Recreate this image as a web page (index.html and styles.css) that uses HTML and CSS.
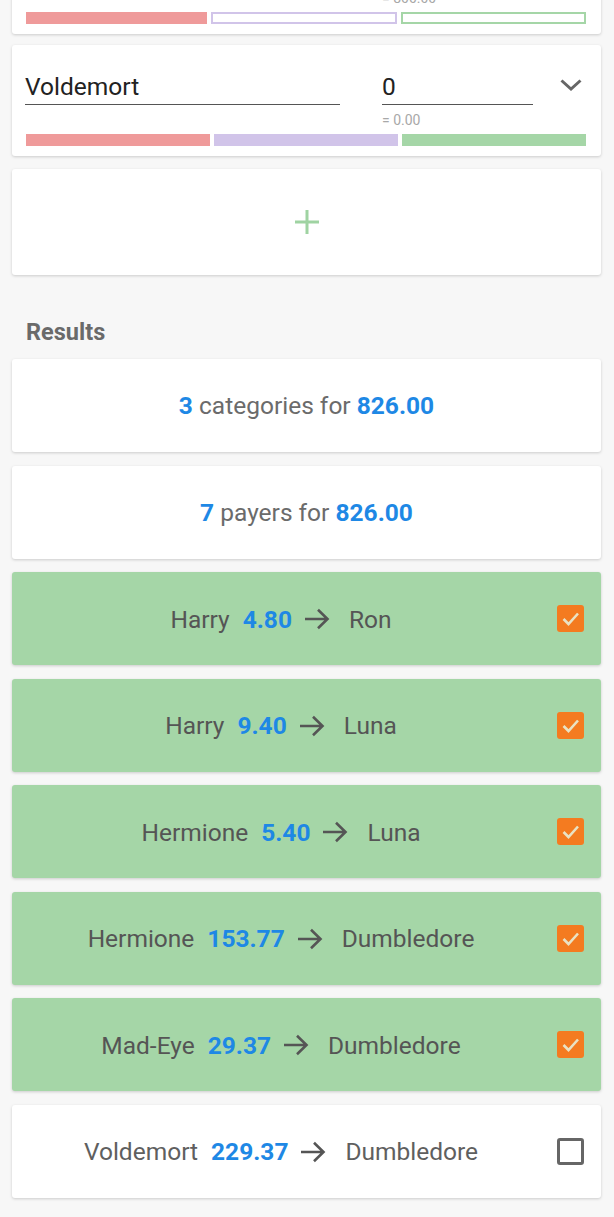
FILE: index.html
```html
<!DOCTYPE html>
<html lang="en">
<head>
<meta charset="utf-8">
<title>Split</title>
<link rel="stylesheet" href="styles.css">
</head>
<body>
<div class="page">
  <div class="card payer payer-first">
    <div class="inputs">
      <div class="field name-field">Dumbledore</div>
      <div class="field amount-field">800</div>
      <svg class="chevron" width="22" height="12" viewBox="0 0 22 12"><path d="M1.5 1.5 L11 10 L20.5 1.5" fill="none" stroke="#666" stroke-width="3"/></svg>
    </div>
    <div class="hint">= 800.00</div>
    <div class="bars">
      <span class="bar red"></span>
      <span class="bar purple outline"></span>
      <span class="bar green outline"></span>
    </div>
  </div>

  <div class="card payer">
    <div class="inputs">
      <div class="field name-field">Voldemort</div>
      <div class="field amount-field">0</div>
      <svg class="chevron" width="22" height="12" viewBox="0 0 22 12"><path d="M1.5 1.5 L11 10 L20.5 1.5" fill="none" stroke="#666" stroke-width="3"/></svg>
    </div>
    <div class="hint">= 0.00</div>
    <div class="bars">
      <span class="bar red"></span>
      <span class="bar purple"></span>
      <span class="bar green"></span>
    </div>
  </div>

  <div class="card add-card">
    <svg width="26" height="26" viewBox="0 0 26 26"><path d="M13 1 V25 M1 13 H25" stroke="#9fd3a2" stroke-width="3" fill="none"/></svg>
  </div>

  <h2 class="section-title">Results</h2>

  <div class="card summary"><span class="num">3</span>&nbsp;categories for&nbsp;<span class="num">826.00</span></div>
  <div class="card summary"><span class="num">7</span>&nbsp;payers for&nbsp;<span class="num">826.00</span></div>

  <div class="card transfer done">
    <div class="transfer-text"><span class="from">Harry</span><span class="num amt">4.80</span><svg class="arrow" width="26" height="22" viewBox="0 0 26 22"><path d="M1 11 H23.5 M14 1.8 L23.5 11 L14 20.2" fill="none" stroke="#555" stroke-width="2.6"/></svg><span class="to">Ron</span></div>
    <span class="check on"><svg width="27" height="27" viewBox="0 0 27 27"><path d="M6.5 14 L11.5 19 L21 8.5" fill="none" stroke="#e9e2c4" stroke-width="2.6"/></svg></span>
  </div>
  <div class="card transfer done">
    <div class="transfer-text"><span class="from">Harry</span><span class="num amt">9.40</span><svg class="arrow" width="26" height="22" viewBox="0 0 26 22"><path d="M1 11 H23.5 M14 1.8 L23.5 11 L14 20.2" fill="none" stroke="#555" stroke-width="2.6"/></svg><span class="to">Luna</span></div>
    <span class="check on"><svg width="27" height="27" viewBox="0 0 27 27"><path d="M6.5 14 L11.5 19 L21 8.5" fill="none" stroke="#e9e2c4" stroke-width="2.6"/></svg></span>
  </div>
  <div class="card transfer done">
    <div class="transfer-text"><span class="from">Hermione</span><span class="num amt">5.40</span><svg class="arrow" width="26" height="22" viewBox="0 0 26 22"><path d="M1 11 H23.5 M14 1.8 L23.5 11 L14 20.2" fill="none" stroke="#555" stroke-width="2.6"/></svg><span class="to">Luna</span></div>
    <span class="check on"><svg width="27" height="27" viewBox="0 0 27 27"><path d="M6.5 14 L11.5 19 L21 8.5" fill="none" stroke="#e9e2c4" stroke-width="2.6"/></svg></span>
  </div>
  <div class="card transfer done">
    <div class="transfer-text"><span class="from">Hermione</span><span class="num amt">153.77</span><svg class="arrow" width="26" height="22" viewBox="0 0 26 22"><path d="M1 11 H23.5 M14 1.8 L23.5 11 L14 20.2" fill="none" stroke="#555" stroke-width="2.6"/></svg><span class="to">Dumbledore</span></div>
    <span class="check on"><svg width="27" height="27" viewBox="0 0 27 27"><path d="M6.5 14 L11.5 19 L21 8.5" fill="none" stroke="#e9e2c4" stroke-width="2.6"/></svg></span>
  </div>
  <div class="card transfer done">
    <div class="transfer-text"><span class="from">Mad-Eye</span><span class="num amt">29.37</span><svg class="arrow" width="26" height="22" viewBox="0 0 26 22"><path d="M1 11 H23.5 M14 1.8 L23.5 11 L14 20.2" fill="none" stroke="#555" stroke-width="2.6"/></svg><span class="to">Dumbledore</span></div>
    <span class="check on"><svg width="27" height="27" viewBox="0 0 27 27"><path d="M6.5 14 L11.5 19 L21 8.5" fill="none" stroke="#e9e2c4" stroke-width="2.6"/></svg></span>
  </div>
  <div class="card transfer">
    <div class="transfer-text"><span class="from">Voldemort</span><span class="num amt">229.37</span><svg class="arrow" width="26" height="22" viewBox="0 0 26 22"><path d="M1 11 H23.5 M14 1.8 L23.5 11 L14 20.2" fill="none" stroke="#555" stroke-width="2.6"/></svg><span class="to">Dumbledore</span></div>
    <span class="check off"></span>
  </div>
</div>
</body>
</html>
```

FILE: styles.css
```css
* { box-sizing: border-box; }

html, body {
  margin: 0;
  padding: 0;
  background: #f7f7f7;
  font-family: Roboto, "Liberation Sans", sans-serif;
  overflow: hidden;
}

.page {
  padding: 0 13px 40px 12px;
}

.card {
  background: #fff;
  border-radius: 3px;
  box-shadow: 0 1px 3px rgba(0, 0, 0, 0.18);
}

/* payer cards */
.payer {
  padding: 0 15px 10px 13px;
  margin-top: 11px;
  height: 111px;
}

.payer-first {
  margin-top: -77px;
}

.inputs {
  display: flex;
  align-items: flex-end;
  height: 60px;
}

.field {
  font-size: 24.5px;
  line-height: 30px;
  color: #222;
  border-bottom: 1px solid #555;
  padding-bottom: 2px;
}

.name-field {
  width: 315px;
}

.amount-field {
  width: 151px;
  margin-left: 42px;
}

.chevron {
  align-self: center;
  margin: 20px 0 0 27px;
}

.hint {
  margin-left: 357px;
  margin-top: 7px;
  font-size: 14px;
  line-height: 16px;
  color: #a8a8a8;
}

.bars {
  display: flex;
  gap: 4px;
  margin: 6px 0 0 1px;
  height: 12px;
}

.bar {
  flex: 1;
  height: 12px;
}

.bar.red { background: #ef9a9a; }
.bar.purple { background: #d1c4e9; }
.bar.green { background: #a5d6a7; }

.bar.outline { background: #fff; }
.bar.purple.outline { border: 2.5px solid #d1c4e9; }
.bar.green.outline { border: 2.5px solid #a5d6a7; }

/* add card */
.add-card {
  margin-top: 13px;
  height: 106px;
  display: flex;
  align-items: center;
  justify-content: center;
  padding-left: 1px;
}

.section-title {
  margin: 43px 0 13px 14px;
  font-size: 23.5px;
  line-height: 28px;
  font-weight: 700;
  color: #6a6a6a;
}

.summary {
  height: 93px;
  margin-top: 13.5px;
  display: flex;
  align-items: center;
  justify-content: center;
  font-size: 24.5px;
  color: #6b6b6b;
}

.section-title + .summary { margin-top: 0; }

.num {
  color: #1e88e5;
  font-weight: 700;
}

/* transfers */
.transfer {
  height: 93px;
  margin-top: 13.5px;
  display: flex;
  align-items: center;
  font-size: 24.5px;
  color: #5f5f5f;
}

.transfer.done {
  background: #a5d6a7;
  color: #555;
}

.transfer-text {
  flex: 1;
  display: flex;
  align-items: center;
  justify-content: center;
  padding-top: 1px;
}

.amt {
  margin: 0 12px 0 13px;
}

.arrow {
  margin-right: 19px;
}

.check {
  width: 27px;
  height: 27px;
  border-radius: 3px;
  margin: 0 17px 0 7px;
  flex: none;
}

.check.on {
  background: #f47b20;
}

.check.on svg { display: block; }

.check.off {
  border: 3px solid #666;
  background: #fff;
}
```
